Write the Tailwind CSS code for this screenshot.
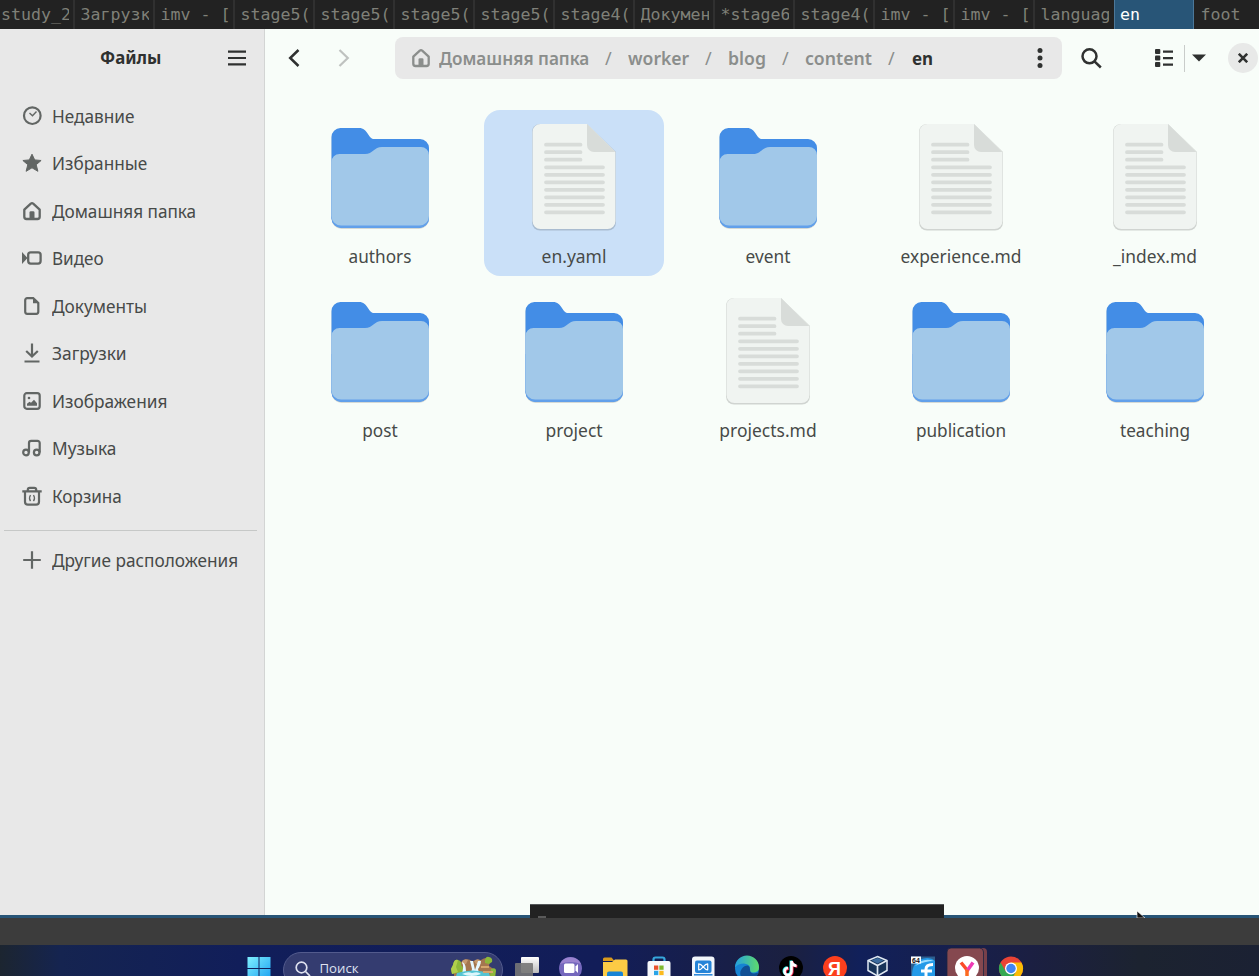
<!DOCTYPE html>
<html lang="ru">
<head>
<meta charset="utf-8">
<title>Файлы</title>
<script src="https://cdn.jsdelivr.net/npm/@tailwindcss/browser@4"></script>
</head>
<body class="w-[1259px] h-[976px] overflow-hidden flex flex-col bg-[#3c3c3c] font-['Noto_Sans',sans-serif]">
<svg class="hidden">
  <symbol id="folder" viewBox="0 0 110 120">
    <path d="M6.500 18a9 9 0 0 1 9-9.500H34c9 0 9 11.500 15 11.500h46a9 9 0 0 1 9 9V99a10 10 0 0 1-10 10H16.500a10 10 0 0 1-10-10Z" fill="#000" opacity=".14"/>
    <path d="M6.500 17a9 9 0 0 1 9-9H34c9 0 9 11 15 11h46a9 9 0 0 1 9 9V98a10 10 0 0 1-10 10H16.500a10 10 0 0 1-10-10Z" fill="#438de6"/>
    <path d="M6.500 60H104V98a10 10 0 0 1-10 10H16.500a10 10 0 0 1-10-10Z" fill="#62a0ea"/>
    <path d="M6.500 42a8 8 0 0 1 8-8H40c8 0 9-7 17-7h39a8 8 0 0 1 8 8V96a9.500 9.500 0 0 1-9.500 9.500H16a9.500 9.500 0 0 1-9.500-9.500Z" fill="#a1c8e9"/>
  </symbol>
  <symbol id="doc" viewBox="0 0 110 120">
    <path d="M13 12a8 8 0 0 1 8-8H68L97 32V102.500a8 8 0 0 1-8 8H21a8 8 0 0 1-8-8Z" fill="#000" opacity=".16"/>
    <path d="M13.500 12a8 8 0 0 1 8-8H68L96.500 32V101a8 8 0 0 1-8 8h-67a8 8 0 0 1-8-8Z" fill="#f0f4f1"/>
    <path d="M68 4 96.500 32H75a7 7 0 0 1-7-7Z" fill="#d8dcd9"/>
    <path d="M27 24.700h34.500M27 32.200h34.500M27 39.700h34.500M27 47.300h57M27 54.800h57M27 62.300h57M27 69.800h57M27 77.300h57M27 84.800h57M27 92.300h57" stroke="#d8dcd9" stroke-width="3.800" stroke-linecap="round"/>
  </symbol>
  <symbol id="home" viewBox="0 0 20 20">
    <path d="M2.300 8.600 8.800 2.600q1.200-1 2.400 0l6.500 6v7.200a2.200 2.200 0 0 1-2.200 2.200h-11a2.200 2.200 0 0 1-2.200-2.200Z" fill="none" stroke="currentColor" stroke-width="2.300" stroke-linejoin="round"/>
    <path d="M7.500 18v-6.500a1.300 1.300 0 0 1 1.300-1.300h2.400a1.300 1.300 0 0 1 1.300 1.300V18Z" fill="currentColor"/>
  </symbol>
</svg>

<!-- Tab strip -->
<nav class="h-[29px] shrink-0 flex bg-[#222222] text-[#7f8078] text-[16.6px] leading-[29px] font-['DejaVu_Sans_Mono',monospace] whitespace-pre overflow-hidden">
  <div class="w-[75px] shrink-0 pl-px border-r-2 border-[#303030]"><p class="w-[68px] overflow-hidden">study_2</p></div>
  <div class="w-20 shrink-0 pl-[5.500px] border-r-2 border-[#303030]"><p class="w-[68px] overflow-hidden">Загрузк</p></div>
  <div class="w-20 shrink-0 pl-[5.500px] border-r-2 border-[#303030]"><p>imv - [</p></div>
  <div class="w-20 shrink-0 pl-[5.500px] border-r-2 border-[#303030]"><p>stage5(</p></div>
  <div class="w-20 shrink-0 pl-[5.500px] border-r-2 border-[#303030]"><p>stage5(</p></div>
  <div class="w-20 shrink-0 pl-[5.500px] border-r-2 border-[#303030]"><p>stage5(</p></div>
  <div class="w-20 shrink-0 pl-[5.500px] border-r-2 border-[#303030]"><p>stage5(</p></div>
  <div class="w-20 shrink-0 pl-[5.500px] border-r-2 border-[#303030]"><p>stage4(</p></div>
  <div class="w-20 shrink-0 pl-[5.500px] border-r-2 border-[#303030]"><p class="w-[68px] overflow-hidden">Докумен</p></div>
  <div class="w-20 shrink-0 pl-[5.500px] border-r-2 border-[#303030]"><p class="w-[68px] overflow-hidden">*stage6</p></div>
  <div class="w-20 shrink-0 pl-[5.500px] border-r-2 border-[#303030]"><p>stage4(</p></div>
  <div class="w-20 shrink-0 pl-[5.500px] border-r-2 border-[#303030]"><p>imv - [</p></div>
  <div class="w-20 shrink-0 pl-[5.500px] border-r-2 border-[#303030]"><p>imv - [</p></div>
  <div class="w-[79px] shrink-0 pl-[5.500px]"><p class="w-[68px] overflow-hidden">languag</p></div>
  <div class="w-20 shrink-0 pl-1.5 bg-[#285577] border-x border-[#4c7899] text-white"><p class="-ml-px">en</p></div>
  <div class="w-[65px] shrink-0 pl-[6.500px]">foot</div>
</nav>

<!-- File manager window -->
<div class="relative h-[889px] shrink-0 flex border-b-3 border-[#285577] bg-[#f8fdf9]">
  <aside class="w-[265px] shrink-0 bg-[#e8e8e8] border-r border-[#d3d5d4] text-[#474a48]">
    <header class="h-[63px] flex items-center pb-1.5 text-[#2f3130]">
      <h1 class="w-[128px] ml-[100px] text-[17.3px] font-bold leading-6 whitespace-nowrap"><span class="inline-block origin-left scale-x-[.975]">Файлы</span></h1>
      <svg class="w-[18px] h-4" viewBox="0 0 18 16" stroke="currentColor" stroke-width="2.200"><path d="M0 1.600h18M0 8h18M0 14.400h18"/></svg>
    </header>
    <ul class="text-[18px] leading-6 whitespace-nowrap">
      <li class="h-[47.5px] flex items-center gap-2.5 pl-[21.5px]"><svg class="size-5 text-[#626664]" viewBox="0 0 20 20" fill="none" stroke="currentColor"><circle cx="10.300" cy="9.700" r="8.300" stroke-width="2.200"/><path d="m7.500 7 3 2.700 4-4.200" stroke-width="1.400"/></svg><span class="inline-block origin-left scale-x-[.955]">Недавние</span></li>
      <li class="h-[47.5px] flex items-center gap-2.5 pl-[21.5px]"><svg class="size-5 text-[#626664]" viewBox="0 0 20 20"><path d="m10 1.200 2.700 5.700 6.400.600-4.900 4.200 1.700 6.600-5.900-3.500-5.900 3.500 1.700-6.600L.900 7.500l6.400-.600Z" fill="currentColor" stroke="currentColor" stroke-linejoin="round"/></svg><span class="inline-block origin-left scale-x-[.955]">Избранные</span></li>
      <li class="h-[47.5px] flex items-center gap-2.5 pl-[21.5px]"><svg class="size-5 text-[#626664]"><use href="#home"/></svg><span class="inline-block origin-left scale-x-[.953]">Домашняя папка</span></li>
      <li class="h-[47.5px] flex items-center gap-2.5 pl-[21.5px]"><svg class="size-5 text-[#626664]" viewBox="0 0 20 20"><rect x="6.200" y="4.300" width="12.400" height="11.300" rx="2.500" fill="none" stroke="currentColor" stroke-width="2.300"/><path d="M0 4 5.500 10 0 16Z" fill="currentColor"/></svg><span class="inline-block origin-left scale-x-[.95]">Видео</span></li>
      <li class="h-[47.5px] flex items-center gap-2.5 pl-[21.5px]"><svg class="size-5 text-[#626664]" viewBox="0 0 20 20"><path d="M5.200 2.200h6L16.300 7v8.800a2 2 0 0 1-2 2H5.200a2 2 0 0 1-2-2V4.200a2 2 0 0 1 2-2Z" fill="none" stroke="currentColor" stroke-width="2.200"/><path d="M11 2v5.300h5.500Z" fill="currentColor"/></svg><span class="inline-block origin-left scale-x-[.957]">Документы</span></li>
      <li class="h-[47.5px] flex items-center gap-2.5 pl-[21.5px]"><svg class="size-5 text-[#626664]" viewBox="0 0 20 20" fill="none" stroke="currentColor" stroke-width="2.200"><path d="M10 .500v12.500M4.200 8l5.800 5.500L15.800 8M2.500 18.500h15"/></svg><span class="inline-block origin-left scale-x-[.965]">Загрузки</span></li>
      <li class="h-[47.5px] flex items-center gap-2.5 pl-[21.5px]"><svg class="size-5 text-[#626664]" viewBox="0 0 20 20"><rect x="2.300" y="2.200" width="15.400" height="15.600" rx="2.500" fill="none" stroke="currentColor" stroke-width="2.200"/><path d="M5 14.800v-2l2.500-2 1.500 1 3-3 3 3.500v2.500Z" fill="currentColor"/><circle cx="7" cy="7" r="1.300" fill="currentColor"/></svg><span class="inline-block origin-left scale-x-[.96]">Изображения</span></li>
      <li class="h-[47.5px] flex items-center gap-2.5 pl-[21.5px]"><svg class="size-5 text-[#626664]" viewBox="0 0 20 20" fill="none" stroke="currentColor" stroke-width="2.200"><circle cx="4" cy="14.500" r="2.800"/><circle cx="14.700" cy="14.500" r="2.800"/><path d="M7 14.500V5a2.200 2.200 0 0 1 2.200-2.200h6.300A2.200 2.200 0 0 1 17.700 5v9.500"/></svg><span class="inline-block origin-left scale-x-[.96]">Музыка</span></li>
      <li class="h-[47.5px] flex items-center gap-2.5 pl-[21.5px]"><svg class="size-5 text-[#626664]" viewBox="0 0 20 20" fill="none" stroke="currentColor" stroke-width="2.200"><path d="M.300 5.300h19.400M5.800 5V3.800a2 2 0 0 1 2-2h4.400a2 2 0 0 1 2 2V5M3 5v10.700a3 3 0 0 0 3 3h8a3 3 0 0 0 3-3V5"/><path d="M8.500 9Q6.500 12 8.500 15.200M11.500 9q2 3 0 6.200" stroke-width="1.300"/></svg><span class="inline-block origin-left scale-x-[.95]">Корзина</span></li>
      <li class="mt-[10px] mb-[6px] ml-1 mr-[7px] h-px bg-[#c6c8c7]"></li>
      <li class="h-[47.5px] flex items-center gap-2.5 pl-[21.5px]"><svg class="size-5 text-[#626664]" viewBox="0 0 20 20" stroke="currentColor" stroke-width="2.200"><path d="M10 1.200v17.600M1.200 10h17.600"/></svg><span class="inline-block origin-left scale-x-[.957]">Другие расположения</span></li>
    </ul>
  </aside>

  <main class="flex-1">
    <header class="h-[58px] flex items-center text-[#2f3130]">
      <svg class="w-3 h-[18px] ml-[23px]" viewBox="0 0 12 18" fill="none" stroke="currentColor" stroke-width="2.500"><path d="M10.500 1 2.200 9l8.300 8"/></svg>
      <svg class="w-3 h-[18px] ml-[38px] text-[#bfc2c0]" viewBox="0 0 12 18" fill="none" stroke="currentColor" stroke-width="2.200"><path d="M1.500 1 9.800 9l-8.300 8"/></svg>
      <div class="w-[667px] h-[42px] ml-[45px] pl-4 rounded-lg bg-[#e8e8e8] flex items-center text-[18px] font-semibold leading-6 whitespace-nowrap text-[#8b8e8c]">
        <svg class="size-5"><use href="#home"/></svg>
        <span class="w-[166px] ml-2 -mt-px"><span class="inline-block origin-left scale-x-[.952]">Домашняя папка</span></span>
        <span class="w-[23px] -mt-px font-normal">/</span>
        <span class="w-[77px] -mt-px"><span class="inline-block origin-left scale-x-[.975]">worker</span></span>
        <span class="w-[23px] -mt-px font-normal">/</span>
        <span class="w-[54px] -mt-px"><span class="inline-block origin-left scale-x-[.98]">blog</span></span>
        <span class="w-[23px] -mt-px font-normal">/</span>
        <span class="w-[83px] -mt-px"><span class="inline-block origin-left scale-x-[.98]">content</span></span>
        <span class="w-[24px] -mt-px font-normal">/</span>
        <span class="w-[125px] -mt-px font-bold text-[#2f3130]"><span class="inline-block origin-left scale-x-[.94]">en</span></span>
        <svg class="w-1.5 h-5 text-[#2f3130]" viewBox="0 0 6 20" fill="currentColor"><circle cx="3" cy="2.500" r="2.500"/><circle cx="3" cy="10" r="2.500"/><circle cx="3" cy="17.500" r="2.500"/></svg>
      </div>
      <svg class="size-[22px] ml-[18px]" viewBox="0 0 22 22" fill="none" stroke="currentColor" stroke-width="2.500"><circle cx="9.500" cy="9.300" r="7"/><path d="m14.500 14.300 6.300 6.200"/></svg>
      <svg class="w-[18px] h-[18px] ml-[53px]" viewBox="0 0 18 18" fill="currentColor"><rect width="5.300" height="5" rx="1"/><rect y="6.500" width="5.300" height="5" rx="1"/><rect y="13" width="5.300" height="5" rx="1"/><path d="M8 1.500h10v2.200H8zM8 8h10v2.200H8zM8 14.500h10v2.200H8z"/></svg>
      <i class="w-px h-[27px] ml-[11px] bg-[#c9ccca]"></i>
      <svg class="w-3.5 h-2 ml-[7px]" viewBox="0 0 14 8"><path d="M0 .500h14L7 7.500Z" fill="currentColor"/></svg>
      <div class="size-[30px] ml-[21.5px] rounded-full bg-[#e8e9e8] flex items-center justify-center"><svg class="size-2.5" viewBox="0 0 10 10" stroke="currentColor" stroke-width="2.600"><path d="m.800.800 8.400 8.400M9.200.800.800 9.200"/></svg></div>
    </header>
    <div class="mt-[22.500px] ml-[25px] grid grid-cols-[repeat(5,180px)] gap-x-[13.75px] gap-y-2 text-[18px] leading-6 text-center text-[#474a48]">
      <figure class="h-[166px] pt-2.5 rounded-2xl"><svg class="w-[110px] h-[120px] mx-auto"><use href="#folder"/></svg><figcaption class="mt-1 scale-x-[.955]">authors</figcaption></figure>
      <figure class="h-[166px] pt-2.5 rounded-2xl bg-[#cae0f8]"><svg class="w-[110px] h-[120px] mx-auto"><use href="#doc"/></svg><figcaption class="mt-1 scale-x-[.97]">en.yaml</figcaption></figure>
      <figure class="h-[166px] pt-2.5 rounded-2xl"><svg class="w-[110px] h-[120px] mx-auto"><use href="#folder"/></svg><figcaption class="mt-1 scale-x-[.96]">event</figcaption></figure>
      <figure class="h-[166px] pt-2.5 rounded-2xl"><svg class="w-[110px] h-[120px] mx-auto"><use href="#doc"/></svg><figcaption class="mt-1 scale-x-[.965]">experience.md</figcaption></figure>
      <figure class="h-[166px] pt-2.5 rounded-2xl"><svg class="w-[110px] h-[120px] mx-auto"><use href="#doc"/></svg><figcaption class="mt-1 scale-x-[.965]">_index.md</figcaption></figure>
      <figure class="h-[166px] pt-2.5 rounded-2xl"><svg class="w-[110px] h-[120px] mx-auto"><use href="#folder"/></svg><figcaption class="mt-1 scale-x-[.955]">post</figcaption></figure>
      <figure class="h-[166px] pt-2.5 rounded-2xl"><svg class="w-[110px] h-[120px] mx-auto"><use href="#folder"/></svg><figcaption class="mt-1 scale-x-[.97]">project</figcaption></figure>
      <figure class="h-[166px] pt-2.5 rounded-2xl"><svg class="w-[110px] h-[120px] mx-auto"><use href="#doc"/></svg><figcaption class="mt-1 scale-x-[.97]">projects.md</figcaption></figure>
      <figure class="h-[166px] pt-2.5 rounded-2xl"><svg class="w-[110px] h-[120px] mx-auto"><use href="#folder"/></svg><figcaption class="mt-1 scale-x-[.955]">publication</figcaption></figure>
      <figure class="h-[166px] pt-2.5 rounded-2xl"><svg class="w-[110px] h-[120px] mx-auto"><use href="#folder"/></svg><figcaption class="mt-1 scale-x-[.955]">teaching</figcaption></figure>
    </div>
  </main>
  <!-- Popup edge and mouse pointer over the window -->
  <div class="absolute left-[530px] -bottom-[3px] w-[414px] h-3.5 bg-[#222222] border-t border-[#55585a]"><i class="absolute left-2 bottom-0 w-2 h-0.5 bg-[#5a5a5a]"></i></div>
  <svg class="absolute left-[1136px] -bottom-[3px] w-2.5 h-[7px]" viewBox="0 0 10 7"><path d="M1 0 9 7H1Z" fill="#111" stroke="#fff" stroke-width=".600"/></svg>
</div>

<!-- Host taskbar -->
<footer class="mt-[27px] h-[31px] shrink-0 flex overflow-hidden bg-[linear-gradient(90deg,#1c2530_0,#152450_60px,#111e5a_240px,#121d58_600px,#1b2040_790px,#11205a_860px,#1b1f42_1030px,#1c2330_1140px,#1b2133_1259px)] text-[#dfe2f0]">
  <svg class="w-6 h-[31px] ml-[246.500px] shrink-0" viewBox="0 0 24 31"><defs><linearGradient id="win" x2="1" y2="1"><stop stop-color="#7ff0ff"/><stop offset="1" stop-color="#1a9ff0"/></linearGradient></defs><path d="M.500 12h11v11H.500zM12.500 12h11v11h-11zM.500 24h11v11H.500zM12.500 24h11v11h-11z" fill="url(#win)"/></svg>
  <div class="w-[220px] h-9 mt-[7px] ml-[12.500px] shrink-0 rounded-full bg-[#343c70] border border-[#535b8d] flex overflow-hidden">
    <svg class="size-4 mt-2 ml-[10.5px]" viewBox="0 0 16 16" fill="none" stroke="currentColor" stroke-width="1.700"><circle cx="6.500" cy="6.500" r="5.300"/><path d="m10.500 10.500 4.500 4.500"/></svg>
    <span class="w-[139px] shrink-0 pl-[9px] mt-[5px] text-[13.2px] leading-5 font-['Open_Sans',sans-serif]">Поиск</span>
    <svg class="w-[48px] h-[30px] mt-[3px] shrink-0" viewBox="0 0 48 30">
      <path d="M11 6q6-5 11-1l9-1q6-4 9 0l-1 6 6 4v16H4V16l6-3Z" fill="#a4764f"/>
      <path d="M12 5q3-3 6-1l-2 4h-4ZM24 5q3-3 6-1l1 4h-5Z" fill="#c79a6e"/>
      <path d="M3 9q1-6 5-5 4 1 3 5l4 5-3 3H6l-4 1-1-5ZM35 4q1-4 4-3 4 1 3 5l-3 2-4-1ZM41 13q5-2 5 2l-1 7-5-2Z" fill="#8db83a"/>
      <path d="M3 9q1-6 5-5l-2 7 2 5-6 2-1-5Z" fill="#b0cf4c"/>
      <path d="M12 6q4 1 4 9l-2 6h-4q5-8 2-15ZM20 5h3l2 9 3-9h3q-1 6-3 8l2 8H20l2-8Z" fill="#e6f7ff"/>
      <path d="M7 17q16-5 32 0l4 13H3Z" fill="#54c3d3"/>
      <path d="M12 18q6-3 10-1 6-2 9 1-9 4-19 0Z" fill="#dcf6fb"/>
      <path d="M31 11h8M33 16h10M36 21h8" stroke="#d5a56d" stroke-width="2"/>
    </svg>
  </div>
  <div class="ml-[2px] flex">
    <svg class="w-11 h-[31px]" viewBox="0 0 44 31"><defs><linearGradient id="tv" y2="1" x2="0"><stop stop-color="#fff"/><stop offset="1" stop-color="#bbb"/></linearGradient></defs><rect x="16" y="12" width="18" height="16" rx="1" fill="url(#tv)"/><rect x="10" y="18" width="18" height="16" rx="1" fill="#777" opacity=".9"/></svg>
    <svg class="w-11 h-[31px]" viewBox="0 0 44 31"><circle cx="21.500" cy="23.500" r="11.500" fill="#7568bd"/><path d="M11 19a11.500 11.500 0 0 1 21 0q-10-4-21 0Z" fill="#9a83cf"/><rect x="15" y="18.500" width="10.500" height="9.500" rx="1.500" fill="#fff"/><path d="m26.500 21.500 2.500-2.500v9l-2.500-2.500Z" fill="#fff"/></svg>
    <svg class="w-11 h-[31px]" viewBox="0 0 44 31"><path d="M10 14q0-1.500 1.500-1.500h7l3 3.500H10Z" fill="#d99a1c"/><path d="M10 17h9l3-2.500h11q1.500 0 1.500 1.500v18H10Z" fill="#fccb45"/><path d="M14 28.500a2 2 0 0 1 2-2h12a2 2 0 0 1 2 2V35H14Z" fill="#1783d4"/></svg>
    <svg class="w-11 h-[31px]" viewBox="0 0 44 31"><path d="M16.500 17v-2.500a2 2 0 0 1 2-2h7a2 2 0 0 1 2 2V17" fill="none" stroke="#36a7dc" stroke-width="2.200"/><rect x="10.500" y="16" width="23" height="18" rx="2" fill="#f6f8fb"/><path d="M17 20.500h4.300v4.300H17z" fill="#e9502b"/><path d="M22.300 20.500h4.300v4.300h-4.300z" fill="#7eb82c"/><path d="M17 25.800h4.300v4.300H17z" fill="#2aa4e8"/><path d="M22.300 25.800h4.300v4.300h-4.300z" fill="#fbb91c"/></svg>
    <svg class="w-11 h-[31px]" viewBox="0 0 44 31"><rect x="11" y="11.500" width="22.500" height="24" rx="3" fill="#f2f6fb"/><rect x="14" y="15.500" width="16.500" height="12.500" rx="2" fill="#2584d8"/><path d="M22.200 21.800q-2.500-3-4.500-3v6q2 0 4.500-3t4.500-3v6q-2 0-4.500-3Z" fill="none" stroke="#fff" stroke-width="1.200" stroke-linejoin="round"/><path d="M13 29.800h18.500" stroke="#2584d8" stroke-width="1.500"/></svg>
    <svg class="w-11 h-[31px]" viewBox="0 0 44 31"><defs><linearGradient id="ed"><stop stop-color="#249fe0"/><stop offset="1" stop-color="#5fdc6b"/></linearGradient></defs><circle cx="22" cy="23.500" r="12" fill="#1683d2"/><path d="M10 22.500a12 12 0 0 1 24 0q0 5-6 5-4 0-3-3 1-5-6-6-6 0-9 4Z" fill="url(#ed)"/><path d="M18 34.500q-5-6-1-11 2-3 6-3 2 1 2 4 0 4 4 4l5-1-4 7Z" fill="#104f94"/></svg>
    <svg class="w-11 h-[31px]" viewBox="0 0 44 31"><circle cx="22" cy="23" r="12" fill="#000"/><g fill="none" stroke-width="2.600"><path d="M22.500 16v10.500a3.500 3.500 0 1 1-3.500-3.500M22.500 16q.500 4.500 5 4.800" stroke="#25f4ee" transform="translate(-.7 -.5)"/><path d="M22.500 16v10.500a3.500 3.500 0 1 1-3.500-3.500M22.500 16q.500 4.500 5 4.800" stroke="#fe2c55" transform="translate(.8 .6)"/><path d="M22.500 16v10.500a3.500 3.500 0 1 1-3.500-3.500M22.500 16q.500 4.500 5 4.800" stroke="#fff"/></g></svg>
    <svg class="w-11 h-[31px]" viewBox="0 0 44 31"><circle cx="22" cy="23" r="12" fill="#fc3f1d"/><text x="21.500" y="29.500" text-anchor="middle" font-family="Liberation Sans" font-weight="700" font-size="18" fill="#fff">Я</text></svg>
    <svg class="w-11 h-[31px]" viewBox="0 0 44 31"><path d="m20.500 11.500 9.500 4v10L20.500 31 11 25.500v-10Z" fill="#173358" stroke="#dfe8f2" stroke-width="1.500"/><path d="m11 15.500 9.500 5 9.500-5M20.500 20.500V31" fill="none" stroke="#dfe8f2" stroke-width="1.700"/><path d="m14.500 15.500 6-2.500 6 2.500-6 3Z" fill="#3b6b9e"/></svg>
    <svg class="w-11 h-[31px]" viewBox="0 0 44 31"><rect x="10" y="11.500" width="24" height="23" fill="#2d5f8f"/><path d="M11 31q0-17 15-18 5 0 8 3v15Z" fill="#249ae8"/><path d="M14 21q8-9 19-5-9 0-19 5Z" fill="#9bdcff"/><path d="M25 33V24q0-4.500 7-4.500M20 26h11" fill="none" stroke="#fff" stroke-width="3"/><rect x="10" y="11.500" width="10" height="7" fill="#fff"/><text x="15" y="17.500" text-anchor="middle" font-family="Liberation Sans" font-weight="700" font-size="7" fill="#111">64</text></svg>
    <svg class="w-11 h-[31px]" viewBox="0 0 44 31"><rect x="6" y="3" width="36" height="40" rx="4" fill="#77404a"/><rect x="2" y="3" width="36.500" height="40" rx="4" fill="#85484f" stroke="#1d2340" stroke-width=".800"/><circle cx="22" cy="23" r="12" fill="#fff"/><path d="m16 17.500 6.500 8" stroke="#fb4b28" stroke-width="3.500"/><path d="m28 17.500-6 8.500" stroke="#ee39b5" stroke-width="3.500"/><path d="M22 24.500v9" stroke="#fc6a20" stroke-width="3.500"/></svg>
    <svg class="w-11 h-[31px]" viewBox="0 0 44 31"><circle cx="22" cy="23.500" r="12" fill="#ea4335"/><path d="M11.600 17.500A12 12 0 0 0 22 35.500l5-9H16.800Z" fill="#34a853"/><path d="M22 17.500h10.400A12 12 0 0 1 22 35.500l5.200-9Z" fill="#fbbc05"/><circle cx="22" cy="23.500" r="6" fill="#fff"/><circle cx="22" cy="23.500" r="4.700" fill="#4285f4"/></svg>
  </div>
</footer>
</body>
</html>
